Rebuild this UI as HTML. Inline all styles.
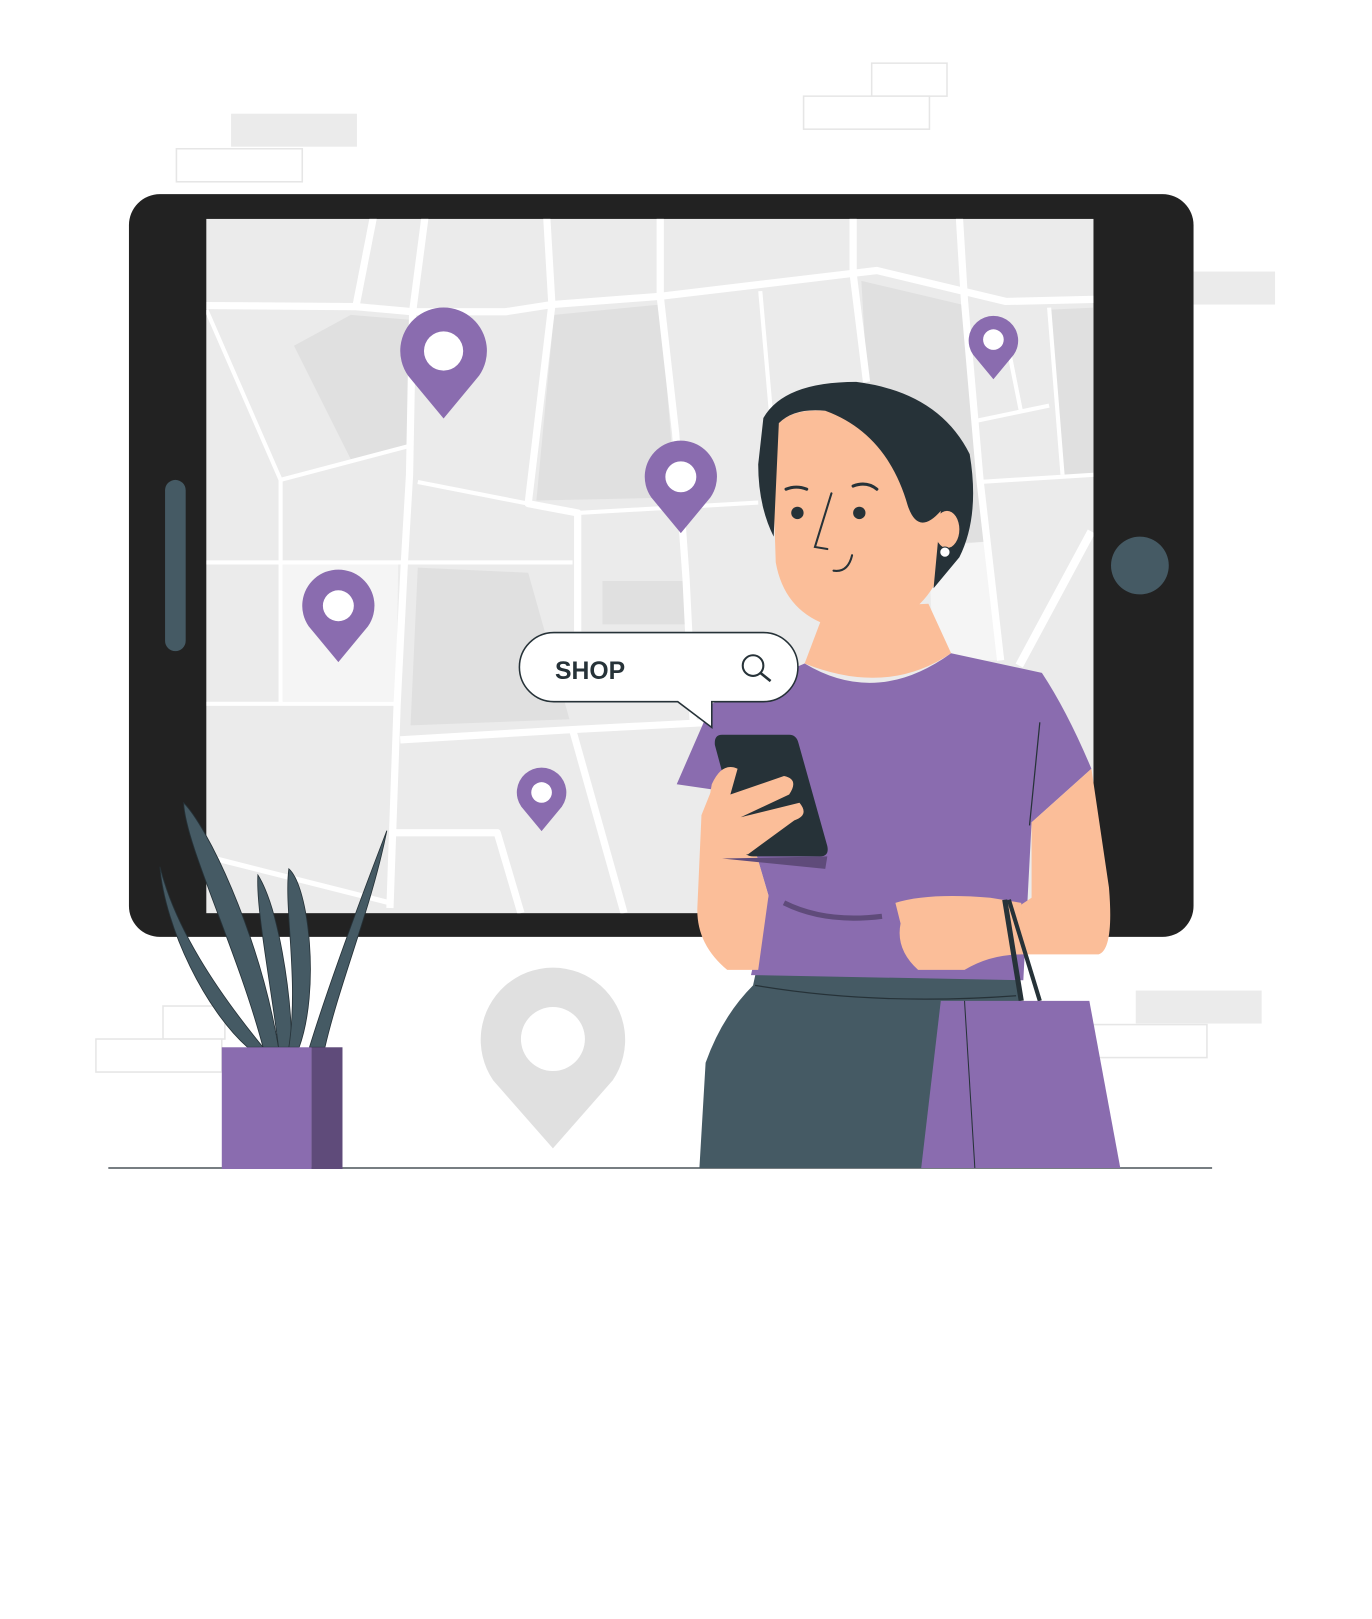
<!DOCTYPE html>
<html><head><meta charset="utf-8"><style>html,body{margin:0;padding:0;background:#fff}svg{display:block}</style></head>
<body>
<svg width="1372" height="1619" viewBox="0 0 1330 1569" xmlns="http://www.w3.org/2000/svg">
<defs>
<g id="pin"><path d="M0,1.56 L-0.82,0.57 A1 1 0 1 1 0.82,0.57 Z" /></g>
</defs>
<g fill="#ebebeb">
<rect x="224" y="110" width="122" height="32"/>
<rect x="1157" y="263" width="79" height="32"/>
<rect x="1101" y="960" width="122" height="32"/>
</g>
<g fill="#fff" stroke="#e6e6e6" stroke-width="1.5">
<rect x="171" y="144" width="122" height="32"/>
<rect x="845" y="61" width="73" height="32"/>
<rect x="779" y="93" width="122" height="32"/>
<rect x="1060" y="993" width="110" height="32"/>
<rect x="158" y="975" width="60" height="32"/>
<rect x="93" y="1007" width="122" height="32"/>
</g>
<rect x="125" y="188" width="1032" height="720" rx="30" fill="#222"/>
<rect x="200" y="212" width="860" height="673" fill="#ebebeb"/>
<rect x="160" y="465" width="20" height="166" rx="10" fill="#455a64"/>
<circle cx="1105" cy="548" r="28" fill="#455a64"/>
<g fill="#e0e0e0">
<polygon points="285,335 340,305 400,310 398,432 340,445"/>
<polygon points="537,305 640,295 655,482 520,485"/>
<polygon points="405,550 512,555 552,697 398,703"/>
<rect x="584" y="563" width="83" height="42"/>
<polygon points="835,272 932,295 955,525 850,530"/>
<polygon points="1017,300 1060,298 1060,460 1030,460"/>
</g>
<g fill="#f5f5f5">
<polygon points="274,547 386,547 384,680 274,680"/>
<polygon points="900,530 955,525 970,640 905,640"/>
</g>
<clipPath id="scr"><rect x="200" y="212" width="860" height="673"/></clipPath>
<g clip-path="url(#scr)" fill="none" stroke="#fff" stroke-width="7" stroke-linejoin="round">
<polyline points="200,296 345,297 400,302 490,302 535,295 640,287 825,265 850,262 975,292 1060,290"/>
<polyline points="362,210 345,297"/>
<polyline points="412,210 400,302 397,460 392,545 385,682 378,880"/>
<polyline points="530,210 535,295 512,488 560,497 560,612"/>
<polyline points="640,210 640,287 655,420 665,560 672,700"/>
<polyline points="827,210 827,265 840,370"/>
<polyline points="930,210 935,292 950,465 970,640"/>
<polyline points="200,300 272,465 272,682" stroke-width="4"/>
<polyline points="272,465 397,432" stroke-width="4"/>
<polyline points="200,545 555,545" stroke-width="4"/>
<polyline points="200,682 385,682" stroke-width="4"/>
<polyline points="405,467 512,488" stroke-width="4"/>
<polyline points="560,497 735,487" stroke-width="4"/>
<polyline points="388,717 555,707 690,700"/>
<polyline points="555,707 605,885"/>
<polyline points="380,807 482,807 505,885"/>
<polyline points="200,830 378,875" stroke-width="5"/>
<polyline points="950,467 1060,460" stroke-width="4"/>
<polyline points="945,408 1017,393" stroke-width="4"/>
<polyline points="978,340 990,400" stroke-width="4"/>
<polyline points="1017,298 1030,460" stroke-width="4"/>
<polyline points="737,282 750,430" stroke-width="4"/>
<polyline points="988,645 1058,515" stroke-width="8"/>
</g>
<g fill="#8a6caf">
<use href="#pin" transform="translate(430,340) scale(42)"/>
<use href="#pin" transform="translate(660,462) scale(35)"/>
<use href="#pin" transform="translate(328,587) scale(35)"/>
<use href="#pin" transform="translate(963,330) scale(24)"/>
<use href="#pin" transform="translate(525,768) scale(24)"/>
</g>
<path d="M536,1113 L478,1047 A70 70 0 1 1 594,1047 Z" fill="#e0e0e0"/>
<g fill="#fff">
<circle cx="430" cy="340" r="19"/><circle cx="660" cy="462" r="15"/><circle cx="328" cy="587" r="15"/>
<circle cx="963" cy="329" r="10"/><circle cx="525" cy="768" r="10"/><circle cx="536" cy="1007" r="31"/>
</g>
<line x1="105" y1="1132" x2="1175" y2="1132" stroke="#263238" stroke-width="1.2"/>
<g fill="#455a64" stroke="#263238" stroke-width="0.8">
<path d="M178,778 C200,800 250,900 270,1015 L255,1015 C230,920 180,820 178,778 Z"/>
<path d="M155,840 C170,900 210,960 255,1015 L240,1015 C200,980 160,900 155,840 Z"/>
<path d="M250,848 C270,880 282,960 283,1015 L270,1015 C262,950 248,880 250,848 Z"/>
<path d="M280,842 C300,860 310,960 290,1015 L280,1015 C290,950 275,880 280,842 Z"/>
<path d="M375,805 C360,880 330,950 315,1015 L300,1015 C320,950 350,870 375,805 Z"/>
</g>
<rect x="215" y="1015" width="87" height="118" fill="#8a6caf"/>
<rect x="302" y="1015" width="30" height="118" fill="#5f4b7a"/>
<path d="M735,932 L988,945 L988,970 L908,1132 L678,1132 L684,1030 Q700,985 730,955 Z" fill="#455a64"/>
<path d="M732,955 Q850,975 985,965" fill="none" stroke="#263238" stroke-width="1.2"/>
<path d="M800,590 L900,585 L922,633 Q860,675 780,643 Z" fill="#fbbe99"/>
<path d="M800,600 Q840,620 865,590 L800,590 Z" fill="#e89a6f"/>
<path d="M780,643 Q850,685 922,633 L1010,652 Q1035,690 1058,745 L1000,797 L992,950 L728,945 L745,868 L725,800 L690,765 L656,760 L690,682 Z" fill="#8a6caf"/>
<path d="M760,875 Q800,895 855,888" fill="none" stroke="#5f4b7a" stroke-width="5"/>
<path d="M1008,700 L998,800" stroke="#263238" stroke-width="1.2" fill="none"/>
<path d="M1000,797 L1058,745 L1075,860 Q1080,920 1065,925 L990,925 L985,880 L1000,870 Z" fill="#fbbe99"/>
<path d="M868,875 Q900,865 960,870 L990,875 L990,925 Q960,925 935,940 L890,940 Q868,920 873,895 Z" fill="#fbbe99"/>
<path d="M690,765 L725,800 L745,868 L735,940 L705,940 Q675,915 676,880 L680,790 Z" fill="#fbbe99"/>
<path d="M700,712 L765,712 Q772,712 774,720 L802,820 Q804,830 795,830 L730,830 Q722,830 720,822 L693,722 Q692,712 700,712 Z" fill="#263238"/>
<path d="M700,832 L800,842 L802,830 Z" fill="#5f4b7a"/>
<path d="M690,760 Q700,738 715,745 L708,770 L760,752 Q775,755 765,770 L718,792 L775,778 Q785,790 770,795 L725,828 L700,825 Q682,800 690,760 Z" fill="#fbbe99"/>
<path d="M974,872 L990,970" stroke="#263238" stroke-width="5" fill="none"/>
<path d="M978,872 L1008,970" stroke="#263238" stroke-width="4" fill="none"/>
<path d="M912,970 L1056,970 L1086,1132 L893,1132 Z" fill="#8a6caf"/>
<path d="M935,970 L945,1132" stroke="#263238" stroke-width="1" fill="none"/>
<path d="M748,420 Q760,395 800,398 Q880,410 915,470 L920,520 Q915,570 880,595 Q840,615 800,605 Q760,590 752,545 Z" fill="#fbbe99"/>
<path d="M740,405 Q760,370 830,370 Q910,380 940,440 Q950,500 930,540 L905,570 L912,495 Q890,520 880,490 Q860,420 800,398 Q770,395 755,410 L750,520 Q735,490 735,450 Z" fill="#263238"/>
<ellipse cx="918" cy="513" rx="12" ry="18" fill="#fbbe99"/>
<circle cx="916" cy="535" r="5" fill="#fff" stroke="#263238" stroke-width="1"/>
<g fill="#263238"><circle cx="773" cy="497" r="6"/><circle cx="833" cy="497" r="6"/></g>
<g fill="none" stroke="#263238" stroke-width="3" stroke-linecap="round">
<path d="M762,474 Q772,470 782,474"/><path d="M827,471 Q840,466 850,474"/>
<path d="M806,478 L790,530 L802,532" stroke-width="2"/>
<path d="M808,553 Q822,555 826,538" stroke-width="2"/>
</g>
<path d="M537,613 L740,613 A33 33 0 0 1 740,680 L690,680 L690,705 L657,680 L537,680 A33 33 0 0 1 537,613 Z" fill="#fff" stroke="#263238" stroke-width="1.5"/>
<text x="538" y="658" font-family="Liberation Sans, sans-serif" font-weight="bold" font-size="24" fill="#263238">SHOP</text>
<circle cx="730" cy="645" r="10" fill="none" stroke="#263238" stroke-width="2"/>
<line x1="737" y1="652" x2="747" y2="660" stroke="#263238" stroke-width="2.5"/>
</svg>
</body></html>
